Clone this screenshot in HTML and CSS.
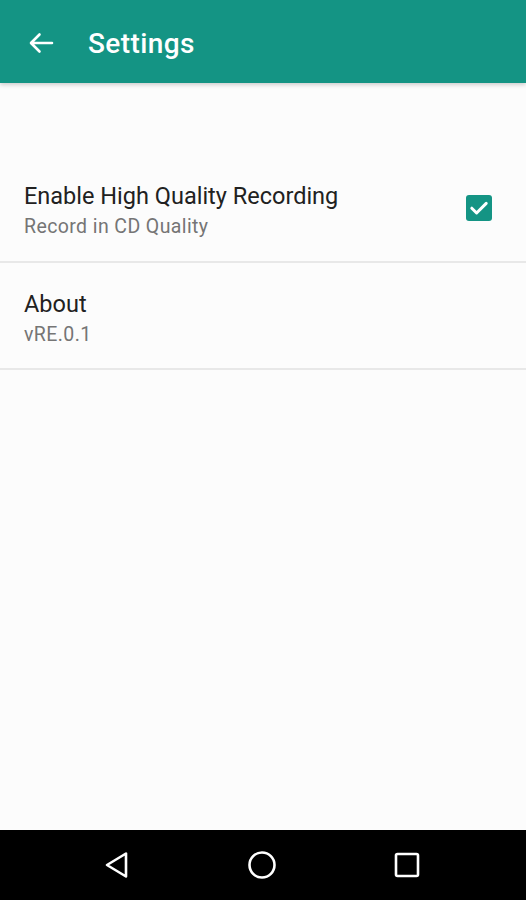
FILE: index.html
```html
<!DOCTYPE html>
<html lang="en">

<head>
    <meta charset="UTF-8">
    <meta name="viewport" content="width=device-width, initial-scale=1.0">
    <title>Settings</title>
    <link rel="stylesheet" href="styles.css">
</head>

<body>
    <div class="screen">
        <div class="toolbar">
            <svg class="back" width="26" height="22" viewBox="0 0 26 22">
                <path d="M24 11H3.5M11.5 2.5L3 11l8.5 8.5" fill="none" stroke="#fff" stroke-width="2.6" stroke-linecap="round" stroke-linejoin="round" />
            </svg>
            <h1>Settings</h1>
        </div>

        <div class="list">
            <div class="pref pref-first">
                <div class="pref-text">
                    <div class="pref-title">Enable High Quality Recording</div>
                    <div class="pref-summary">Record in CD Quality</div>
                </div>
                <div class="check">
                    <svg width="26" height="26" viewBox="0 0 26 26">
                        <path d="M5.8 13.2l4.8 4.8 9.6-9.6" fill="none" stroke="#fff" stroke-width="3" stroke-linecap="round" stroke-linejoin="round" />
                    </svg>
                </div>
            </div>
            <div class="pref pref-second">
                <div class="pref-text">
                    <div class="pref-title">About</div>
                    <div class="pref-summary">vRE.0.1</div>
                </div>
            </div>
        </div>

        <div class="navbar">
            <svg width="28" height="32" viewBox="0 0 28 32">
                <path d="M23 4.5v23L4 16z" fill="none" stroke="#fff" stroke-width="2.6" stroke-linejoin="round" />
            </svg>
            <svg width="30" height="30" viewBox="0 0 30 30">
                <circle cx="15" cy="15" r="12.5" fill="none" stroke="#fff" stroke-width="2.6" />
            </svg>
            <svg width="28" height="28" viewBox="0 0 28 28">
                <rect x="3" y="3" width="22" height="22" rx="1.5" fill="none" stroke="#fff" stroke-width="2.6" />
            </svg>
        </div>
    </div>
</body>

</html>
```
FILE: styles.css
```css
html,
body {
    margin: 0;
    padding: 0;
}

body {
    font-family: Roboto, "Noto Sans", sans-serif;
    background: #fcfcfc;
}

.screen {
    width: 526px;
    height: 900px;
    display: flex;
    flex-direction: column;
}

.toolbar {
    height: 83px;
    background: #149484;
    display: flex;
    align-items: center;
    padding-left: 28px;
    box-shadow: 0 2px 4px rgba(0, 0, 0, 0.18);
    position: relative;
    z-index: 1;
}

.toolbar .back {
    margin-top: 2px;
}

.toolbar h1 {
    margin: 4px 0 0 34px;
    color: #fff;
    font-size: 28px;
    font-weight: 500;
    letter-spacing: 0.4px;
}

.list {
    flex: 1;
    padding-top: 81px;
}

.pref {
    display: flex;
    align-items: center;
    padding: 0 34px 0 24px;
    border-bottom: 2px solid #e8e8e8;
    box-sizing: border-box;
}

.pref-first {
    height: 99px;
}

.pref-first .pref-text {
    margin-top: -4px;
}

.pref-second {
    height: 107px;
}

.pref-second .pref-text {
    margin-top: 5px;
}

.pref-text {
    flex: 1;
}

.pref-title {
    font-size: 23.5px;
    color: #212121;
    line-height: 28px;
}

.pref-summary {
    font-size: 19.5px;
    color: #757575;
    line-height: 24px;
    margin-top: 5px;
    letter-spacing: 0.4px;
}

.check {
    width: 26px;
    height: 26px;
    border-radius: 3px;
    background: #149484;
    margin-top: -10px;
}

.check svg {
    display: block;
}

.navbar {
    height: 70px;
    background: #000;
    display: flex;
    align-items: center;
    justify-content: space-between;
    padding: 0 105px 0 103px;
}
```
